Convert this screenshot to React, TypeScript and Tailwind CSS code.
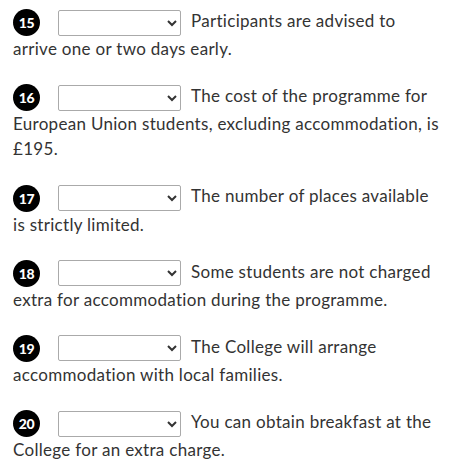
const items = [
  { n: 15, text: "Participants are advised to arrive one or two days early." },
  { n: 16, text: "The cost of the programme for European Union students, excluding accommodation, is £195." },
  { n: 17, text: "The number of places available is strictly limited." },
  { n: 18, text: "Some students are not charged extra for accommodation during the programme." },
  { n: 19, text: "The College will arrange accommodation with local families." },
  { n: 20, text: "You can obtain breakfast at the College for an extra charge." },
];

function Badge({ n }: { n: number }) {
  return (
    <span className="inline-flex items-center justify-center w-[27px] h-[27px] rounded-full bg-black text-white text-[14px] font-black align-middle font-['Lato',sans-serif] tracking-[-0.3px]">
      {n}
    </span>
  );
}

export default function App() {
  return (
    <div className="bg-white px-[13px] pt-[8px] text-[#333] text-[17px] leading-[25px] tracking-[0.3px] font-['Lato','Noto_Sans',sans-serif]">
      {items.map((it) => (
        <p key={it.n} className="mb-[22px]">
          <Badge n={it.n} />
          <select className="ml-[18px] mr-[10px] w-[123px] h-[26px] border border-[#aaa] rounded-[2px] bg-white align-middle text-[14px]">
            <option value=""></option>
            <option>TRUE</option>
            <option>FALSE</option>
            <option>NOT GIVEN</option>
          </select>
          {it.text}
        </p>
      ))}
    </div>
  );
}
